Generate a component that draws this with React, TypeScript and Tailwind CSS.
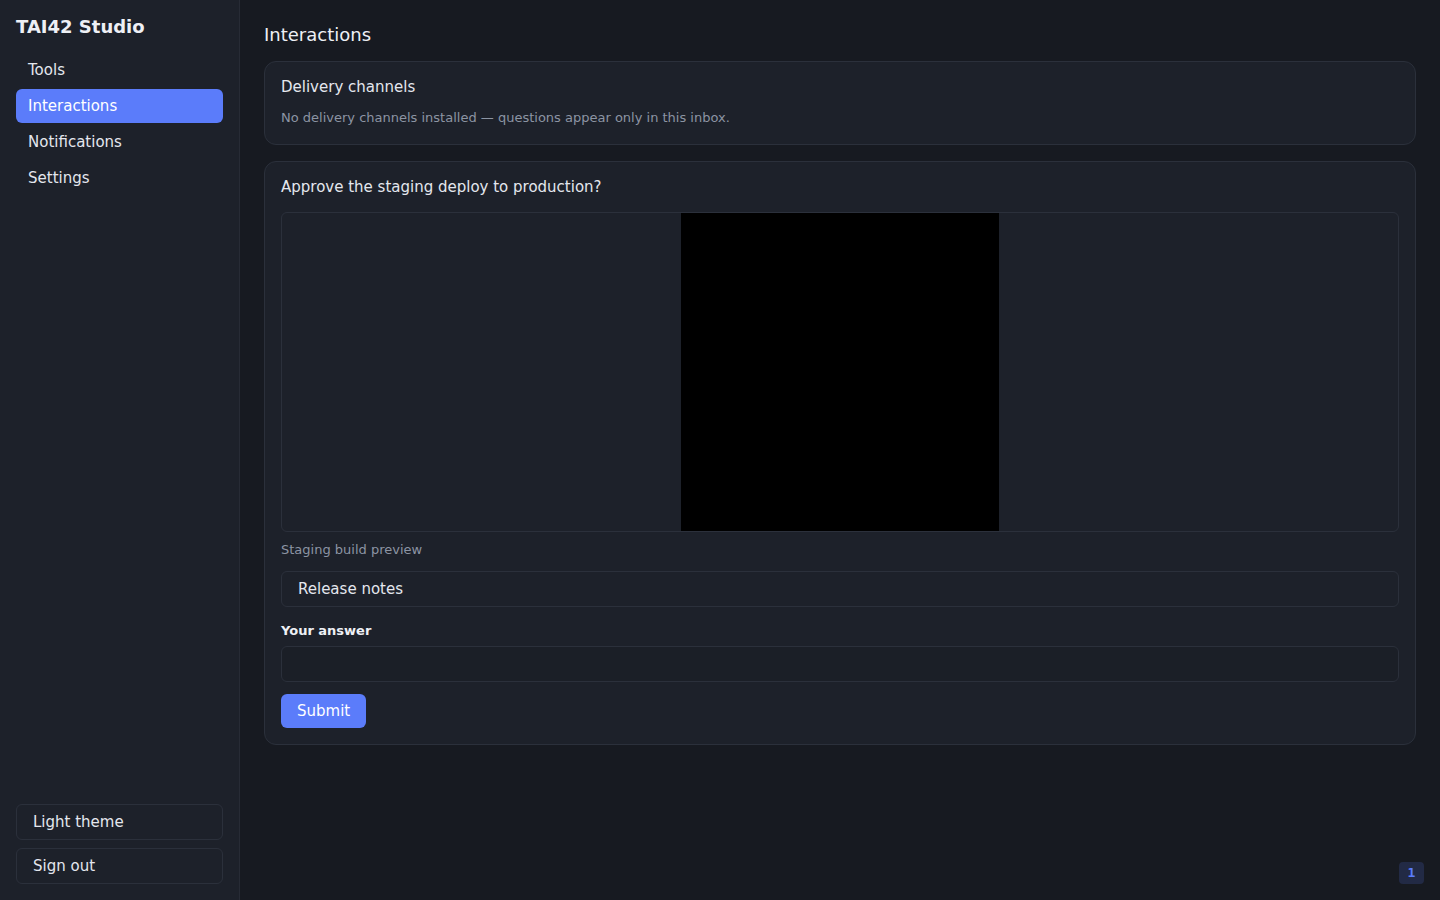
import React from "react";

const NavItem = ({ label, active }: { label: string; active?: boolean }) => (
  <div
    className={
      "h-[34px] flex items-center px-3 rounded-md text-[15px] " +
      (active ? "bg-[#5b7cfa] text-white" : "text-[#e4e7ee]")
    }
  >
    {label}
  </div>
);

const App = () => {
  const nav = ["Tools", "Interactions", "Notifications", "Settings"];

  return (
    <div
      className="flex h-[900px] w-[1440px] bg-[#171a21] text-[#e4e7ee] overflow-hidden"
      style={{ fontFamily: "'DejaVu Sans', sans-serif" }}
    >
      {/* Sidebar */}
      <aside className="w-[240px] shrink-0 bg-[#1d212a] border-r border-[#272b35] flex flex-col px-4 pt-[15px] pb-4">
        <div className="text-[18px] font-bold leading-[24px] text-[#eef0f5]">TAI42 Studio</div>
        <nav className="mt-[14px] flex flex-col gap-[2px]">
          {nav.map((n) => (
            <NavItem key={n} label={n} active={n === "Interactions"} />
          ))}
        </nav>
        <div className="mt-auto flex flex-col gap-2">
          <button className="h-[36px] w-full text-left px-4 rounded-md border border-[#2b303b] text-[15px] text-[#e4e7ee]">
            Light theme
          </button>
          <button className="h-[36px] w-full text-left px-4 rounded-md border border-[#2b303b] text-[15px] text-[#e4e7ee]">
            Sign out
          </button>
        </div>
      </aside>

      {/* Main */}
      <main className="flex-1 px-6 pt-6 flex flex-col">
        <h1 className="text-[18px] leading-[22px] text-[#eef0f5]">Interactions</h1>

        <section className="mt-[15px] rounded-xl border border-[#2b303b] bg-[#1d212a] px-4 pt-[15px] pb-[17px]">
          <div className="text-[15px] leading-[20px]">Delivery channels</div>
          <div className="mt-[12px] text-[13px] leading-[18px] text-[#8c94a3]">
            No delivery channels installed — questions appear only in this inbox.
          </div>
        </section>

        <section className="mt-4 rounded-xl border border-[#2b303b] bg-[#1d212a] px-4 pt-[15px] pb-4">
          <div className="text-[15px] leading-[20px]">Approve the staging deploy to production?</div>

          <div className="mt-[15px] h-[320px] rounded-md border border-[#2b303b] flex justify-center overflow-hidden">
            <div className="w-[318px] h-[318px] bg-black" />
          </div>
          <div className="mt-[9px] text-[13px] leading-[18px] text-[#8c94a3]">Staging build preview</div>

          <div className="mt-[12px] h-[36px] rounded-md border border-[#2b303b] flex items-center px-4 text-[15px]">
            Release notes
          </div>

          <div className="mt-[15px] text-[13px] leading-[18px] font-bold text-[#eef0f5]">Your answer</div>
          <div className="mt-[6px] h-[36px] rounded-md border border-[#2b303b] bg-[#1b1f27]" />

          <button className="mt-3 h-[34px] px-4 rounded-md bg-[#5b7cfa] text-white text-[15px]">
            Submit
          </button>
        </section>

        <div className="mt-auto mb-4 self-end mr-[-8px] h-[22px] w-[25px] rounded bg-[#222a45] flex items-center justify-center text-[13px] font-bold text-[#5b7cfa]" style={{ fontFamily: "'DejaVu Sans Mono', monospace" }}>
          1
        </div>
      </main>
    </div>
  );
};

export default App;
